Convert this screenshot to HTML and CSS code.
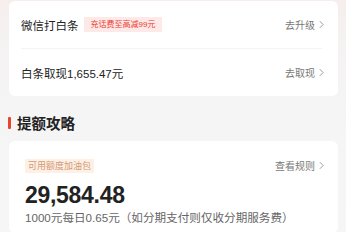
FILE: index.html
```html
<!DOCTYPE html>
<html lang="zh">
<head>
<meta charset="utf-8">
<link rel="stylesheet" href="styles.css">
</head>
<body>
<div class="page">
  <section class="card list">
    <div class="row">
      <div class="row-left">
        <span class="row-title">微信打白条</span>
        <span class="promo">充话费至高减99元</span>
      </div>
      <a class="link">去升级<svg class="chev" viewBox="0 0 6 10" width="6" height="10"><polyline points="1,1 5,5 1,9" fill="none" stroke="#888" stroke-width="1"/></svg></a>
    </div>
    <div class="divider"></div>
    <div class="row">
      <div class="row-left">
        <span class="row-title">白条取现1,655.47元</span>
      </div>
      <a class="link">去取现<svg class="chev" viewBox="0 0 6 10" width="6" height="10"><polyline points="1,1 5,5 1,9" fill="none" stroke="#888" stroke-width="1"/></svg></a>
    </div>
  </section>

  <h2 class="section-title"><span class="bar"></span>提额攻略</h2>

  <section class="card boost">
    <div class="boost-head">
      <span class="tag">可用额度加油包</span>
      <a class="link">查看规则<svg class="chev" viewBox="0 0 6 10" width="6" height="10"><polyline points="1,1 5,5 1,9" fill="none" stroke="#888" stroke-width="1"/></svg></a>
    </div>
    <div class="amount">29,584.48</div>
    <div class="desc">1000元每日0.65元（如分期支付则仅收分期服务费）</div>
  </section>
</div>
</body>
</html>
```
FILE: styles.css
```css
* { box-sizing: border-box; margin: 0; padding: 0; }
html, body {
  width: 346px;
  height: 232px;
  overflow: hidden;
}
body {
  font-family: "Liberation Sans", "Noto Sans CJK SC", sans-serif;
  background: linear-gradient(180deg, #f7eded 0px, #f5f2f2 40px, #f5f5f5 110px, #f6f6f6 232px);
  color: #222;
}
.page {
  padding: 1px 8px 0 9px;
}
.card {
  background: #fff;
  border-radius: 6px;
}
.list {
  padding: 0 14px 0 12px;
}
.row {
  height: 47px;
  display: flex;
  align-items: center;
  justify-content: space-between;
}
.row-left {
  display: flex;
  align-items: center;
  gap: 5px;
}
.row-title {
  font-size: 11.5px;
  color: #222;
}
.promo {
  background: #fde9e7;
  color: #ee3b30;
  font-size: 8px;
  height: 15px;
  line-height: 15px;
  padding: 0 7px;
}
.divider {
  height: 1px;
  background: #f4f4f4;
  margin-right: 2px;
}
.link {
  display: flex;
  align-items: center;
  gap: 4px;
  font-size: 10px;
  color: #777;
}
.chev { width: 5px; height: 9px; }
.section-title {
  display: flex;
  align-items: center;
  gap: 6px;
  margin: 19px 0 0 -1px;
  height: 15px;
  font-size: 14.5px;
  font-weight: bold;
  color: #222;
}
.bar {
  width: 3px;
  height: 12px;
  background: #e8452f;
  border-radius: 1px;
}
.boost {
  margin-top: 11px;
  padding: 17px 14px 0 16px;
  height: 92px;
}
.boost-head {
  display: flex;
  align-items: center;
  justify-content: space-between;
}
.tag {
  background: #fdf0e6;
  color: #d59a74;
  font-size: 9px;
  height: 14px;
  line-height: 14px;
  padding: 0 3px;
}
.amount {
  margin-top: 9px;
  font-size: 23px;
  font-weight: bold;
  color: #222;
  line-height: 26px;
  letter-spacing: -0.3px;
}
.desc {
  margin-top: 1px;
  font-size: 11.6px;
  color: #666;
}
```
